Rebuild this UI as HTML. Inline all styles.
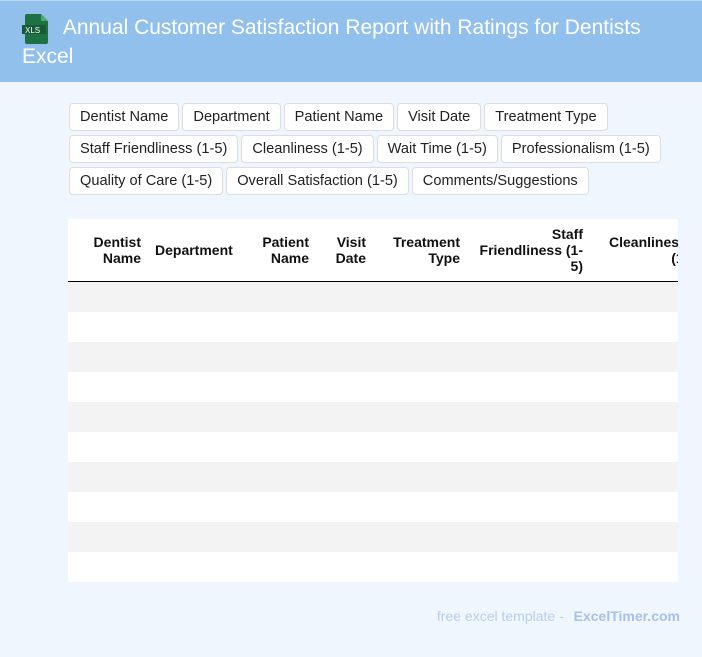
<!DOCTYPE html>
<html><head><meta charset="utf-8"><style>
body{margin:0;width:702px;height:657px;background:#f0f6fe;font-family:"Liberation Sans",Roboto,sans-serif;overflow:hidden;position:relative}
.hdr{position:absolute;left:0;top:0;width:702px;height:82px;background:#92c0ec;border-top:1px solid #b8d5f3;box-sizing:border-box}
.title{position:absolute;left:22px;top:13px;color:#fff;font-size:21px;line-height:29px;width:640px}
.icon{position:absolute;left:22px;top:14px}
.tags{position:absolute;left:69px;top:103px;width:620px}
.row{display:flex;gap:3px;margin-bottom:4px}
.tag{display:block;background:#fff;border:1px solid #ddd;border-radius:4px;padding:0 10px;height:26px;line-height:27px;font-size:14.6px;color:#222}
.tw{position:absolute;left:68px;top:219px;width:610px;height:363px;overflow:hidden;background:#fff}
table{border-collapse:collapse;table-layout:fixed;width:700px}
th{font-size:14px;font-weight:bold;text-align:right;padding:0 8px;height:62px;border-bottom:1px solid #000;color:#111;line-height:16px}
td{height:30px;padding:0}
tr.g td{background:#f3f3f3}
.foot{position:absolute;right:22px;top:608px;font-size:14px;color:#b8cdec}
.foot b{color:#a7c0e8;margin-left:6px}
</style></head><body>
<div class="hdr"></div>
<svg class="icon" width="28" height="30" viewBox="0 0 28 30"><path d="M5 0h14l7 7v21a2 2 0 0 1-2 2H5a2 2 0 0 1-2-2V2a2 2 0 0 1 2-2z" fill="#1e7145"/><path d="M19 0v7h7z" fill="#4ca870"/><rect x="0" y="11" width="24" height="9" fill="#155c36"/><text x="3" y="19" font-size="8" fill="#fff" font-family="Liberation Sans">XLS</text></svg>
<div class="title">&nbsp;&nbsp;&nbsp;&nbsp;&nbsp;&nbsp;&nbsp;Annual Customer Satisfaction Report with Ratings for Dentists Excel</div>
<div class="tags">
<div class="row"><span class="tag">Dentist Name</span><span class="tag">Department</span><span class="tag">Patient Name</span><span class="tag">Visit Date</span><span class="tag">Treatment Type</span></div>
<div class="row"><span class="tag">Staff Friendliness (1-5)</span><span class="tag">Cleanliness (1-5)</span><span class="tag">Wait Time (1-5)</span><span class="tag">Professionalism (1-5)</span></div>
<div class="row"><span class="tag">Quality of Care (1-5)</span><span class="tag">Overall Satisfaction (1-5)</span><span class="tag">Comments/Suggestions</span></div>
</div>
<div class="tw"><table>
<colgroup><col style="width:81px"><col style="width:92px"><col style="width:76px"><col style="width:57px"><col style="width:94px"><col style="width:123px"><col style="width:177px"></colgroup>
<tr><th>Dentist Name</th><th style="text-align:left;padding-left:6px;padding-right:0">Department</th><th>Patient Name</th><th>Visit Date</th><th>Treatment Type</th><th>Staff Friendliness (1-5)</th><th style="text-align:left;padding-left:18px">Cleanliness<br>&nbsp;&nbsp;&nbsp;&nbsp;&nbsp;&nbsp;&nbsp;&nbsp;&nbsp;&nbsp;&nbsp;&nbsp;&nbsp;&nbsp;&nbsp;&nbsp;(1-5)</th></tr>
<tr class="g"><td colspan="7"></td></tr><tr><td colspan="7"></td></tr>
<tr class="g"><td colspan="7"></td></tr><tr><td colspan="7"></td></tr>
<tr class="g"><td colspan="7"></td></tr><tr><td colspan="7"></td></tr>
<tr class="g"><td colspan="7"></td></tr><tr><td colspan="7"></td></tr>
<tr class="g"><td colspan="7"></td></tr><tr><td colspan="7"></td></tr>
</table></div>
<div class="foot">free excel template - <b>ExcelTimer.com</b></div>
</body></html>
